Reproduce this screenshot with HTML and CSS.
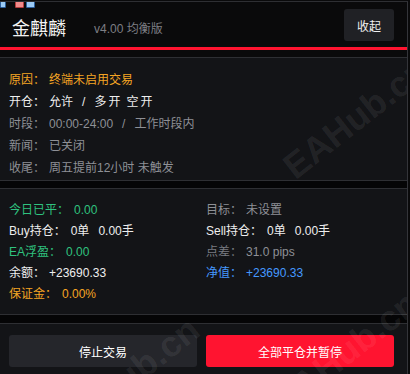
FILE: index.html
```html
<!DOCTYPE html>
<html lang="zh-CN">
<head>
<meta charset="utf-8">
<title>金麒麟 v4.00</title>
<link rel="stylesheet" href="styles.css">
</head>
<body>
<div class="panel">
  <div class="chrome">
    <span class="chip chip-blue chip-small"></span>
    <span class="chip chip-red"></span>
    <span class="chip chip-blue"></span>
  </div>

  <header class="head">
    <div class="brand">
      <span class="title">金麒麟</span>
      <span class="ver">v4.00 均衡版</span>
    </div>
    <button class="collapse">收起</button>
  </header>
  <div class="redbar"></div>
  <div class="spacer"></div>

  <section class="info">
    <div class="row orange"><span class="lbl">原因：</span><span class="val">终端未启用交易</span></div>
    <div class="row white"><span class="lbl">开仓：</span><span class="val">允许<span class="slash">/</span><span class="modes">多开</span><span class="modes">空开</span></span></div>
    <div class="row gray"><span class="lbl">时段：</span><span class="val">00:00-24:00<span class="slash">/</span>工作时段内</span></div>
    <div class="row gray"><span class="lbl">新闻：</span><span class="val">已关闭</span></div>
    <div class="row gray"><span class="lbl">收尾：</span><span class="val">周五提前12小时 未触发</span></div>
  </section>
  <div class="gap"></div>

  <section class="stats">
    <div class="row green"><span class="lbl">今日已平：</span><span class="val">0.00</span></div>
    <div class="row gray"><span class="lbl">目标：</span><span class="val">未设置</span></div>
    <div class="row white"><span class="lbl">Buy持仓：</span><span class="val">0单<span class="lots">0.00手</span></span></div>
    <div class="row white"><span class="lbl">Sell持仓：</span><span class="val">0单<span class="lots">0.00手</span></span></div>
    <div class="row green"><span class="lbl">EA浮盈：</span><span class="val">0.00</span></div>
    <div class="row dim"><span class="lbl">点差：</span><span class="val">31.0 pips</span></div>
    <div class="row white"><span class="lbl">余额：</span><span class="val">+23690.33</span></div>
    <div class="row blue"><span class="lbl">净值：</span><span class="val">+23690.33</span></div>
    <div class="row orange"><span class="lbl">保证金：</span><span class="val">0.00%</span></div>
  </section>
  <div class="gap gap2"></div>

  <footer class="actions">
    <button class="btn btn-dark">停止交易</button>
    <button class="btn btn-red">全部平仓并暂停</button>
  </footer>

  <span class="wm wm1">EAHub.cn</span>
  <span class="wm wm2">EAHub.cn</span>
  <span class="wm wm3">EAHub.cn</span>
</div>
</body>
</html>
```

FILE: styles.css
```css
* { box-sizing: border-box; }

html, body {
  margin: 0;
  padding: 0;
  background: #0a0a0b;
}

body {
  width: 410px;
  height: 374px;
  overflow: hidden;
  font-family: "Liberation Sans", "Noto Sans CJK SC", sans-serif;
  font-size: 12px;
  color: #e6e6e6;
}

.panel {
  position: relative;
  width: 408px;
  height: 373px;
  margin-top: 1px;
  border-top: 1px solid #2e2f33;
  border-right: 1px solid #34353a;
  background: #131417;
  overflow: hidden;
  display: flex;
  flex-direction: column;
}

/* bits of the host window peeking over the top edge */
.chrome {
  position: absolute;
  top: -1px;
  left: 0;
  display: flex;
  gap: 2px;
  z-index: 5;
}
.chip {
  display: block;
  width: 9px;
  height: 7px;
  border: 1px solid #2b5e9c;
  border-radius: 1px;
}
.chip-small { width: 6px; margin-right: 7px; }
.chip-blue { background: #9ccbf5; }
.chip-red { background: #f08a8a; border-color: #b23a3a; }

.head {
  height: 45px;
  flex: none;
  background: #0a0a0b;
  display: flex;
  align-items: center;
  justify-content: space-between;
  padding: 0 13px 0 12px;
}
.brand {
  display: flex;
  align-items: center;
  padding-top: 5px;
}
.title {
  font-family: "Noto Sans CJK SC", sans-serif;
  font-size: 18px;
  color: #f2f2f2;
  line-height: 20px;
}
.ver {
  margin-left: 28px;
  color: #7d7e84;
  font-size: 12px;
}
.collapse {
  width: 50px;
  height: 32px;
  border: 0;
  border-radius: 3px;
  background: #202125;
  color: #f0f0f0;
  font-family: "Noto Sans CJK SC", sans-serif;
  font-size: 12px;
  padding: 0;
  margin-top: 1px;
}

.redbar {
  height: 3px;
  flex: none;
  background: #ff1430;
}
.spacer {
  height: 8px;
  flex: none;
  background: #0a0a0b;
  border-bottom: 1px solid #2e2f33;
}

.info {
  height: 123px;
  flex: none;
  padding: 11px 0 0 9px;
  border-bottom: 1px solid #2e2f33;
}
.info .row { height: 22px; line-height: 22px; }

.gap {
  height: 8px;
  flex: none;
  background: #050506;
  border-bottom: 1px solid #2e2f33;
}
.gap2 { height: 9px; }

.stats {
  height: 126px;
  flex: none;
  padding: 11px 0 0 9px;
  border-bottom: 1px solid #2e2f33;
  display: grid;
  grid-template-columns: 197px 1fr;
  grid-auto-rows: 21px;
  align-content: start;
}
.stats .row { line-height: 21px; white-space: nowrap; }

.row { white-space: nowrap; }
.val { margin-left: 4px; }
.stats .val { margin-left: 5px; }
.stats .gray .val, .stats .dim .val, .stats .blue .val, .stats .white:nth-child(7) .val { margin-left: 4px; }

.slash { margin: 0 9px; }
.modes { letter-spacing: 2px; }
.modes + .modes { margin-left: 4px; }
.lots { margin-left: 9px; }

.orange { color: #f5a524; }
.white { color: #eeeeee; }
.gray { color: #8e9096; }
.dim .lbl { color: #7a7c82; }
.dim .val { color: #8e9096; }
.green { color: #2fc27f; }
.blue { color: #4599ff; }

.actions {
  flex: 1;
  padding: 11px 0 0 9px;
  display: grid;
  grid-template-columns: 188px 188px;
  column-gap: 9px;
  align-content: start;
}
.btn {
  height: 32px;
  border: 0;
  border-radius: 3px;
  color: #ffffff;
  font-family: "Noto Sans CJK SC", sans-serif;
  font-size: 12px;
  padding: 0;
}
.btn-dark { background: #25262b; }
.btn-red { background: #ff1430; }

.wm {
  position: absolute;
  z-index: 4;
  pointer-events: none;
  font-family: "Liberation Sans", sans-serif;
  font-weight: bold;
  font-size: 36px;
  line-height: 36px;
  color: rgba(255, 255, 255, 0.08);
  white-space: nowrap;
  transform: translate(-50%, -50%) rotate(-38deg);
}
.wm1 { left: 356px; top: 116px; }
.wm2 { left: 127px; top: 376px; }
.wm3 { left: 346px; top: 350px; }
```
